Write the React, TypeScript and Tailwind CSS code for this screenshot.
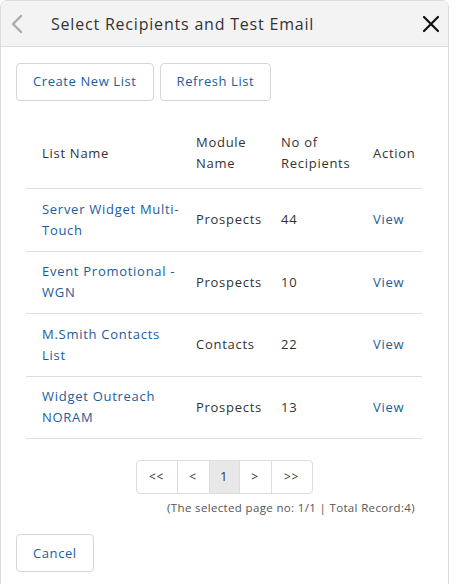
import React from "react";

const rows = [
  { name: ["Server Widget Multi-", "Touch"], module: "Prospects", count: "44" },
  { name: ["Event Promotional -", "WGN"], module: "Prospects", count: "10" },
  { name: ["M.Smith Contacts", "List"], module: "Contacts", count: "22" },
  { name: ["Widget Outreach", "NORAM"], module: "Prospects", count: "13" },
];

export default function App() {
  return (
    <div
      className="w-[463px] h-[584px] overflow-hidden bg-white tracking-[0.045em]"
      style={{ fontFamily: '"Open Sans", "Liberation Sans", sans-serif' }}
    >
      <div className="w-[449px] h-[600px] border border-[#dcdcdc] rounded-t-[7px] overflow-hidden">
        {/* header */}
        <div className="h-[46px] bg-[#f3f3f3] border-b border-[#dcdcdc] flex items-center">
          <div className="w-[50px] pl-[9px] flex items-center">
            <svg width="14" height="20" viewBox="0 0 14 20">
              <path d="M11 2 L3 10 L11 18" fill="none" stroke="#a9a9a9" strokeWidth="2.4" strokeLinecap="round" strokeLinejoin="round" />
            </svg>
          </div>
          <div className="flex-1 text-[16px] text-[#333333] tracking-[0.05em]">Select Recipients and Test Email</div>
          <div className="pr-[8px] flex items-center">
            <svg width="18" height="18" viewBox="0 0 18 18">
              <path d="M2 2 L16 16 M16 2 L2 16" stroke="#111111" strokeWidth="2.2" strokeLinecap="round" />
            </svg>
          </div>
        </div>

        {/* body */}
        <div className="pt-[16px] px-[15px]">
          <div className="flex gap-[6px]">
            <button className="h-[38px] px-[16px] border border-[#d6d6d6] rounded-[4px] text-[13px] text-[#1d5c9b] bg-white tracking-[0.045em]">
              Create New List
            </button>
            <button className="h-[38px] px-[16px] border border-[#d6d6d6] rounded-[4px] text-[13px] text-[#1d5c9b] bg-white tracking-[0.045em]">
              Refresh List
            </button>
          </div>

          <div className="mt-[19px] ml-[10px] w-[396px]">
            <table className="w-full border-collapse text-[13px] leading-[21px] text-[#333333]">
              <thead>
                <tr className="border-b border-[#dddddd]">
                  <th className="w-[154px] pl-[16px] pt-[12px] pb-[14px] text-left font-normal">List Name</th>
                  <th className="w-[85px] pl-[16px] pt-[12px] pb-[14px] text-left font-normal">
                    Module
                    <br />
                    Name
                  </th>
                  <th className="w-[92px] pl-[16px] pt-[12px] pb-[14px] text-left font-normal">
                    No of
                    <br />
                    Recipients
                  </th>
                  <th className="pl-[16px] pt-[12px] pb-[14px] text-left font-normal">Action</th>
                </tr>
              </thead>
              <tbody>
                {rows.map((r) => (
                  <tr key={r.name[0]} className="border-b border-[#dddddd]">
                    <td className="pl-[16px] py-[9.75px] text-[#1d5c9b] whitespace-nowrap">
                      {r.name[0]}
                      <br />
                      {r.name[1]}
                    </td>
                    <td className="pl-[16px] py-[9.75px]">{r.module}</td>
                    <td className="pl-[16px] py-[9.75px]">{r.count}</td>
                    <td className="pl-[16px] py-[9.75px] text-[#1d5c9b]">View</td>
                  </tr>
                ))}
              </tbody>
            </table>

            <div className="mt-[21px] flex justify-center">
              <div className="flex h-[34px] border border-[#dddddd] rounded-[4px] overflow-hidden text-[12px] text-[#333333]">
                <div className="w-[41px] flex items-center justify-center border-r border-[#dddddd]">&lt;&lt;</div>
                <div className="w-[32px] flex items-center justify-center border-r border-[#dddddd]">&lt;</div>
                <div className="w-[30px] flex items-center justify-center border-r border-[#dddddd] bg-[#e8e8e8] text-[13px]">1</div>
                <div className="w-[32px] flex items-center justify-center border-r border-[#dddddd]">&gt;</div>
                <div className="w-[40px] flex items-center justify-center">&gt;&gt;</div>
              </div>
            </div>
            <div className="mt-[5px] pr-[7px] text-right text-[11.5px] text-[#555555] tracking-[0.03em]">
              (The selected page no: 1/1 | Total Record:4)
            </div>
          </div>

          <div className="mt-[18px]">
            <button className="h-[38px] px-[16px] border border-[#d6d6d6] rounded-[4px] text-[13px] text-[#1d5c9b] bg-white tracking-[0.045em]">
              Cancel
            </button>
          </div>
        </div>
      </div>
    </div>
  );
}
